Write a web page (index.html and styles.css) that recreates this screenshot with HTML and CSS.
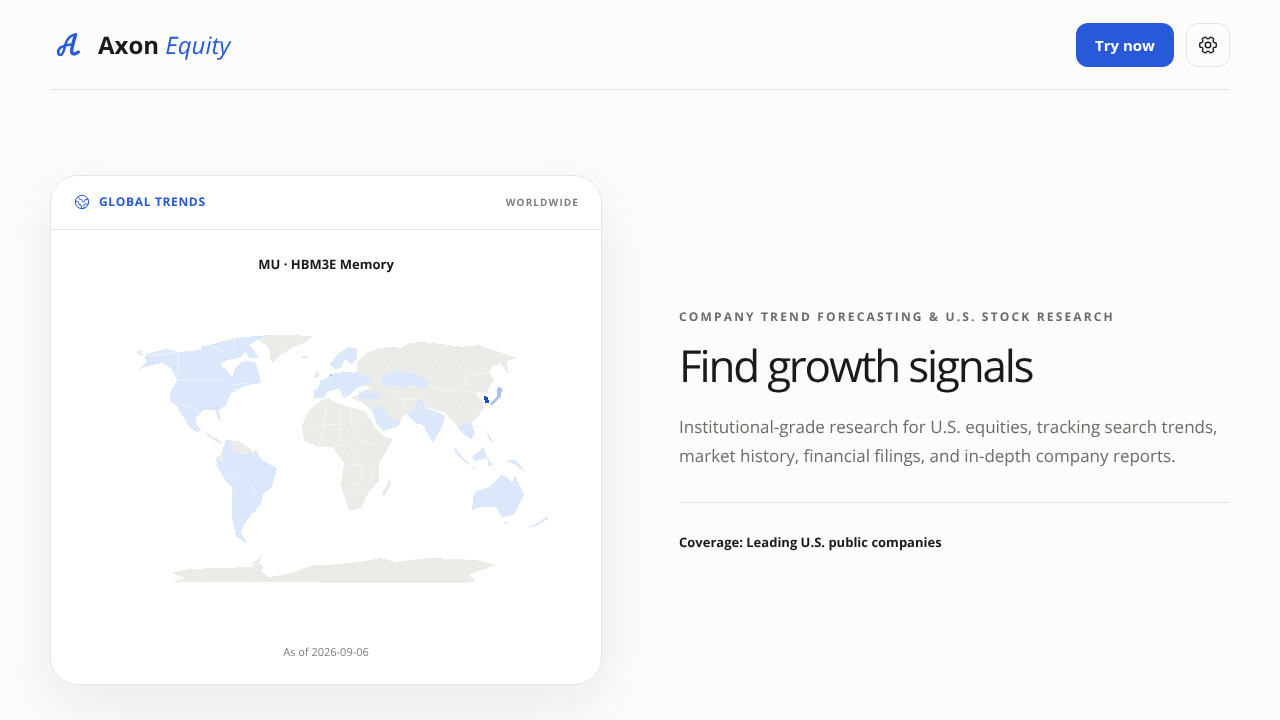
FILE: index.html
```html
<!DOCTYPE html>
<html lang="en">
<head>
    <meta charset="UTF-8">
    <meta name="viewport" content="width=device-width, initial-scale=1.0">
    <title>Axon Equity</title>
    <link rel="stylesheet" href="styles.css">
</head>
<body>
    <div class="page">
        <header class="topbar">
            <div class="brand">
                <svg class="brand-mark" viewBox="0 0 24 24" fill="none" stroke="currentColor" stroke-linecap="round" stroke-linejoin="round">
                    <path stroke-width="2.6" d="M20 1.500C14.500 2 11 6 9.500 11C8.300 15.500 7.500 22 4.500 22C1.800 22 1.200 17.500 4 15C7 12.500 12.500 11.500 17.300 11.500"/>
                    <path stroke-width="3.400" d="M19.500 2C18 6.500 16 13 15.700 17.500C15.500 21.500 18.500 22 22.300 19"/>
                </svg>
                <span class="brand-name">Axon <em>Equity</em></span>
            </div>
            <div class="actions">
                <button class="try-btn">Try now</button>
                <button class="icon-btn" aria-label="Settings">
                    <svg viewBox="0 0 24 24" fill="none" stroke="currentColor" stroke-width="1.5" stroke-linecap="round" stroke-linejoin="round">
                        <g transform="rotate(90 12 12)">
                            <path d="M9.594 3.940c.09-.542.56-.94 1.110-.94h2.593c.55 0 1.020.398 1.110.94l.213 1.281c.063.374.313.686.645.87.074.04.147.083.22.127.325.196.72.257 1.075.124l1.217-.456a1.125 1.125 0 0 1 1.370.49l1.296 2.247a1.125 1.125 0 0 1-.26 1.431l-1.003.827c-.293.241-.438.613-.43.992a7.723 7.723 0 0 1 0 .255c-.008.378.137.75.43.991l1.004.827c.424.35.534.955.26 1.430l-1.298 2.247a1.125 1.125 0 0 1-1.369.491l-1.217-.456c-.355-.133-.75-.072-1.076.124a6.470 6.470 0 0 1-.22.128c-.331.183-.581.495-.644.869l-.213 1.281c-.09.543-.56.94-1.110.94h-2.594c-.55 0-1.019-.398-1.110-.94l-.213-1.281c-.062-.374-.312-.686-.644-.87a6.520 6.520 0 0 1-.22-.127c-.325-.196-.72-.257-1.076-.124l-1.217.456a1.125 1.125 0 0 1-1.369-.49l-1.297-2.247a1.125 1.125 0 0 1 .26-1.431l1.004-.827c.292-.24.437-.613.43-.991a6.932 6.932 0 0 1 0-.255c.007-.38-.138-.751-.43-.992l-1.004-.827a1.125 1.125 0 0 1-.26-1.430l1.297-2.247a1.125 1.125 0 0 1 1.370-.491l1.216.456c.356.133.751.072 1.076-.124.072-.044.146-.086.22-.128.332-.183.582-.495.644-.869l.214-1.280Z"/>
                            <circle cx="12" cy="12" r="3"/>
                        </g>
                    </svg>
                </button>
            </div>
        </header>

        <main class="hero">
            <section class="card">
                <div class="card-head">
                    <div class="card-label">
                        <svg viewBox="0 0 24 24" fill="none" stroke="currentColor" stroke-linecap="round" stroke-linejoin="round">
                            <path d="M21.540 15H17a2 2 0 0 0-2 2v4.540"/>
                            <path d="M7 3.340V5a3 3 0 0 0 3 3a2 2 0 0 1 2 2c0 1.100.9 2 2 2a2 2 0 0 0 2-2c0-1.100.9-2 2-2h3.170"/>
                            <path d="M11 21.950V18a2 2 0 0 0-2-2a2 2 0 0 1-2-2v-1a2 2 0 0 0-2-2H2.050"/>
                            <circle cx="12" cy="12" r="10"/>
                        </svg>
                        <span>GLOBAL TRENDS</span>
                    </div>
                    <span class="card-scope">WORLDWIDE</span>
                </div>
                <div class="card-body">
                    <h2 class="chart-title">MU · HBM3E Memory</h2>
                    <!-- viewBox is in page pixels, traced from the choropleth -->
                    <svg class="map" viewBox="110 325 460 265">
                        <defs>
                            <pattern id="dots" width="9" height="10" patternUnits="userSpaceOnUse">
                                <rect x="1" y="1" width="1" height="1" fill="#e1e1dd"/>
                                <rect x="5" y="6" width="1" height="1" fill="#e1e1dd"/>
                            </pattern>
                        </defs>

                        <!-- grey land -->
                        <g class="land">
                            <path id="greenland" d="M258 339L270 335L290 335L313 336L307 342L293 348L283 354L278 358L275 363L271 360L271 352L268 346Z"/>
                            <path d="M303 356L310 356L309 358L304 359Z"/>
                            <path d="M137 351L142 350L145 355L140 356Z"/>
                            <path d="M316 372L319 371L321 376L315 378Z"/>
                            <path id="eurasia" d="M358 363L367 353L380 348L393 347L402 348L410 343L423 342L443 344L463 347L480 345L503 353L518 358L508 361L510 375L505 368L502 363L493 367L490 373L495 380L487 394L482 392L475 393L483 400L485 408L478 418L470 425L466 422L468 438L462 432L458 426L452 420L447 413L430 408L407 413L403 418L398 425L383 430L372 410L362 402L352 398L366 392L372 387L356 384L352 376L358 370Z"/>
                            <path id="africa" d="M303 425L310 410L323 400L330 398L338 403L350 407L366 411L378 430L385 437L393 438L393 441L380 463L380 480L368 495L362 508L350 511L342 485L345 463L333 447L320 447L305 441Z"/>
                            <path d="M392 477L383 493L385 497L392 485Z"/>
                            <path d="M202 430L210 437L216 441L224 445L222 441L212 435Z"/>
                            <path d="M227 440L240 441L253 450L255 454L242 454L234 452L228 447Z"/>
                            <path d="M217 458L221 455L224 462L218 466Z"/>
                            <path d="M233 473L238 473L251 491L255 498L247 499L240 492L235 488Z"/>
                            <path d="M252 505L257 510L254 513L251 510Z"/>
                            <path d="M515 463L521 464L527 472L519 468Z"/>
                            <path id="antarctica" d="M173 573L190 569L223 568L250 567L259 564L252 565L263 555L260 563L265 567L262 571L270 577L293 573L313 565L330 565L360 562L382 558L397 562L410 560L433 558L477 560L497 565L470 575L477 580L467 583L173 582L186 578Z"/>
                        </g>
                        <!-- fill is set here, url(#dots) in the stylesheet would look in styles.css -->
                        <g fill="url(#dots)">
                            <path d="M366 356L410 345L463 349L500 356L500 365L488 372L480 378L470 372L440 372L408 377L385 376L368 372Z"/>
                            <path d="M430 385L455 380L480 383L475 398L478 410L465 418L445 405L430 395Z"/>
                            <path d="M205 574L250 572L265 575L290 575L313 567L382 561L490 566L470 575L466 582L205 582Z"/>
                        </g>

                        <!-- grey borders -->
                        <g class="borders">
                            <path d="M308 428L323 425L340 424L350 418L370 425M328 402L325 425L320 445M342 404L341 425L343 447M352 407L352 425L360 440L380 446M333 447L350 445L358 462L374 470L372 484M347 465L362 465L362 480L348 490L360 495"/>
                            <path d="M398 380L410 387L430 386L447 392L462 390L475 393M398 380L390 392L398 398L420 398L430 408M405 410L405 398M372 410L382 400M462 390L468 375L490 373"/>
                        </g>

                        <!-- light blue countries -->
                        <g class="tier-low">
                            <path id="north-america" d="M138 371L148 362L145 355L155 352L168 349L180 352L203 350L202 347L210 345L237 338L257 336L270 335L258 340L250 345L256 352L260 358L250 358L247 352L240 358L228 360L221 365L228 370L233 377L237 367L242 362L250 361L256 362L260 373L262 383L248 385L238 390L232 393L227 405L220 410L222 420L218 417L217 410L205 410L197 417L197 425L202 430L198 432L190 427L182 413L177 405L172 402L171 393L178 380L172 368L163 363L145 367Z"/>
                            <path id="scandinavia" d="M331 364L339 354L350 347L358 349L358 358L352 364L346 359L342 368L335 369Z"/>
                            <path id="europe" d="M315 390L319 389L322 380L328 378L331 374L345 372L360 373L373 378L368 384L358 388L350 395L345 398L340 389L333 390L328 392L326 398L315 398Z"/>
                            <path d="M360 392L366 390L382 392L382 398L370 399L360 399Z"/>
                            <path id="kazakhstan" d="M382 376L397 371L415 373L426 379L430 383L424 390L416 385L405 388L398 385L390 388L384 385Z"/>
                            <path id="saudi" d="M372 407L381 405L391 418L402 422L398 427L384 431L378 424Z"/>
                            <path id="india" d="M418 400L423 400L426 408L441 413L446 416L444 424L434 443L431 438L424 425L416 423L407 414L414 410Z"/>
                            <path id="colombia-brazil" d="M227 440L233 442L234 452L242 454L255 454L256 449L263 460L278 468L273 487L263 495L262 505L253 513L245 525L242 533L248 543L237 537L233 517L233 487L228 483L217 465L219 460L224 462L222 455Z"/>
                            <path d="M466 422L472 423L476 432L472 440L466 434L460 429Z"/>
                            <path d="M487 430L490 435L495 445L490 440Z"/>
                            <path d="M455 447L470 464L466 463L456 453Z"/>
                            <path d="M468 467L480 469L474 469Z"/>
                            <path d="M473 457L485 447L488 458L476 461Z"/>
                            <path d="M488 457L494 465L490 467Z"/>
                            <path d="M507 460L517 460L521 466L511 463Z"/>
                            <path id="australia" d="M473 510L475 492L490 487L502 475L508 477L513 483L516 475L525 495L515 515L503 517L497 507L483 507Z"/>
                            <path d="M505 522L509 522L507 525Z"/>
                            <path d="M528 528L540 522L548 516L549 519L537 526Z"/>
                        </g>

                        <!-- blue borders -->
                        <g class="borders">
                            <path d="M145 356L180 352L178 380M171 380L210 381L225 380L233 385L248 383M183 405L195 408L200 414"/>
                            <path d="M232 473L246 478L253 486L256 498M233 490L240 500L248 505M240 470L232 464M326 374L332 384"/>
                            <path d="M210 345L225 352M237 338L232 350"/>
                        </g>

                        <!-- high values -->
                        <path class="tier-high" d="M485 396L489 397L490 403L486 403Z"/>
                        <path class="tier-mid" d="M499 387L503 388L502 396L498 400L493 405L490 404L494 400L498 396L498 391Z"/>
                        <rect class="tier-mid" x="331" y="374" width="2" height="2"/>
                    </svg>
                    <p class="as-of">As of 2026-09-06</p>
                </div>
            </section>

            <section class="intro">
                <p class="eyebrow">COMPANY TREND FORECASTING &amp; U.S. STOCK RESEARCH</p>
                <h1>Find growth signals</h1>
                <p class="lead">Institutional-grade research for U.S. equities, tracking search trends, market history, financial filings, and in-depth company reports.</p>
                <p class="coverage">Coverage: Leading U.S. public companies</p>
            </section>
        </main>
    </div>
</body>
</html>
```
FILE: styles.css
```css
:root {
    --primary-color: #2759d9;
    --text-color: #1a1a1a;
    --muted-color: #6b6b68;
    --line-color: #e5e5e0;
    --bg-color: #fcfcfa;
}
* {
    box-sizing: border-box;
}
body, html {
    margin: 0;
    padding: 0;
    height: 100%;
    overflow: hidden;
    font-family: 'Open Sans', sans-serif;
    text-rendering: geometricPrecision;
    background-color: var(--bg-color);
    color: var(--text-color);
}
.page {
    padding: 0 50px;
    will-change: transform;
}
.topbar {
    display: flex;
    justify-content: space-between;
    align-items: center;
    height: 90px;
    border-bottom: 1px solid var(--line-color);
}
.brand {
    display: flex;
    align-items: center;
    gap: 18px;
    padding-left: 6px;
}
.brand-mark {
    width: 24px;
    height: 24px;
    color: var(--primary-color);
}
.brand-name {
    padding-top: 2px;
    font-size: 24px;
    font-weight: 700;
}
.brand-name em {
    font-weight: 400;
    color: var(--primary-color);
}
.actions {
    display: flex;
    gap: 12px;
}
.try-btn {
    width: 98px;
    height: 44px;
    border: none;
    border-radius: 12px;
    background-color: var(--primary-color);
    color: white;
    font-family: inherit;
    font-size: 15px;
    font-weight: 700;
}
.icon-btn {
    display: flex;
    align-items: center;
    justify-content: center;
    width: 44px;
    height: 44px;
    padding: 0;
    border: 1px solid var(--line-color);
    border-radius: 12px;
    background-color: var(--bg-color);
    color: var(--text-color);
}
.icon-btn svg {
    width: 22px;
    height: 22px;
}
.hero {
    display: flex;
    gap: 77px;
    padding-top: 85px;
}
.card {
    display: flex;
    flex-direction: column;
    flex: none;
    width: 552px;
    height: 510px;
    border: 1px solid var(--line-color);
    border-radius: 28px;
    background-color: white;
    box-shadow: 0 20px 60px rgba(30, 30, 20, 0.08);
}
.card-head {
    display: flex;
    justify-content: space-between;
    align-items: center;
    height: 54px;
    padding: 0 22px 0 23px;
    border-bottom: 1px solid var(--line-color);
}
.card-label {
    display: flex;
    align-items: center;
    gap: 9px;
    padding-bottom: 2px;
    color: var(--primary-color);
    font-size: 12px;
    font-weight: 700;
    letter-spacing: 0.66px;
}
.card-label svg {
    width: 16px;
    height: 16px;
    stroke-width: 1.5;
}
.card-scope {
    padding-bottom: 2px;
    color: #7d7d79;
    font-size: 10px;
    font-weight: 700;
    letter-spacing: 1.1px;
}
.card-body {
    flex: 1;
    display: flex;
    flex-direction: column;
    align-items: center;
}
.chart-title {
    margin: 25px 0 0;
    font-size: 13px;
    font-weight: 700;
    line-height: 18px;
}
.map {
    align-self: flex-start;
    width: 460px;
    height: 265px;
    margin-top: 52px;
    margin-left: 58px;
    shape-rendering: crispEdges;
}
.land {
    fill: #ebebe8;
}
.tier-low {
    fill: #dbe7fb;
}
.tier-mid {
    fill: #a9c2f3;
}
.tier-high {
    fill: #1d4cc9;
}
.borders {
    fill: none;
    stroke: #f8f8f6;
    stroke-width: 0.7;
}
.as-of {
    margin: 55px 0 0;
    color: #7d7d79;
    font-size: 11px;
    line-height: 15px;
}
.intro {
    flex: 1;
    padding-top: 133px;
}
.eyebrow {
    margin: 0;
    color: var(--muted-color);
    font-size: 12px;
    font-weight: 700;
    line-height: 18px;
    letter-spacing: 2.16px;
}
h1 {
    margin: 11px 0 0;
    font-size: 44px;
    font-weight: 400;
    line-height: 56px;
    letter-spacing: -2.2px;
}
.lead {
    margin: 19px 0 0;
    padding-bottom: 32px;
    border-bottom: 1px solid var(--line-color);
    color: var(--muted-color);
    font-size: 17px;
    line-height: 29px;
}
.coverage {
    margin: 30px 0 0;
    font-size: 13px;
    font-weight: 700;
    line-height: 18px;
}
```
